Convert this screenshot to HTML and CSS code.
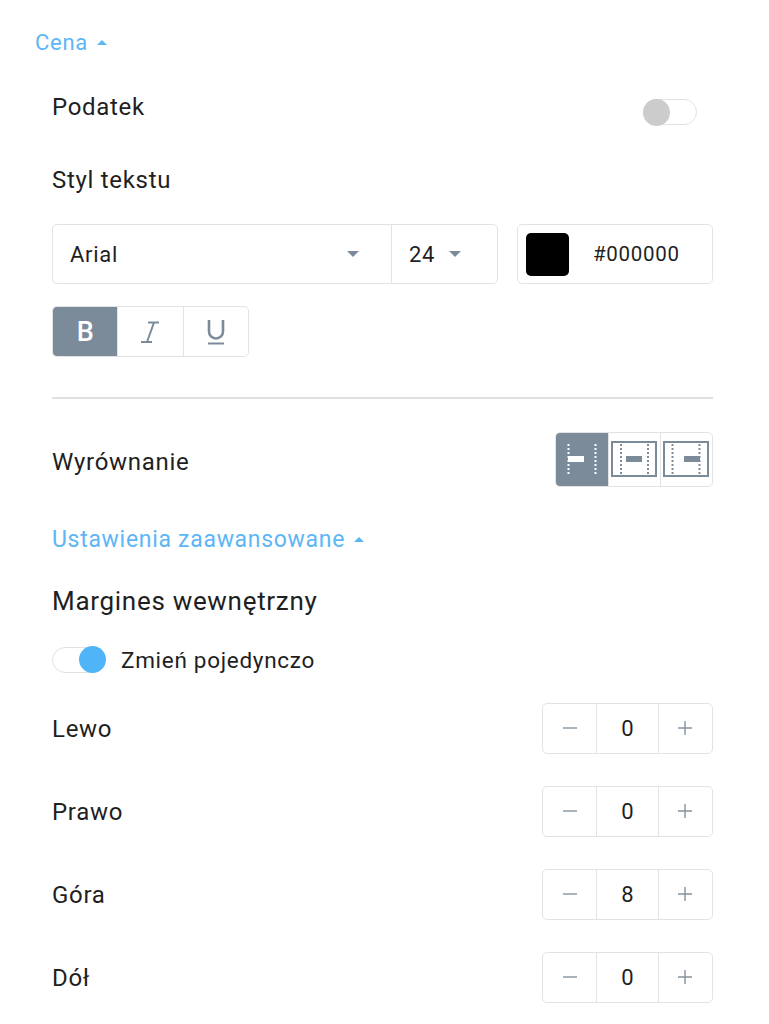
FILE: index.html
```html
<!DOCTYPE html>
<html lang="pl">
<head>
<meta charset="utf-8">
<link rel="stylesheet" href="styles.css">
</head>
<body>
<div class="panel">
  <div class="link-row cena"><span>Cena</span><span class="caret-up"></span></div>

  <div class="row podatek">
    <span class="label">Podatek</span>
    <span class="toggle off"><span class="knob"></span></span>
  </div>

  <div class="row styl"><span class="label">Styl tekstu</span></div>

  <div class="font-row">
    <div class="select-box">
      <div class="sel-font"><span>Arial</span><span class="caret-down"></span></div>
      <div class="sel-size"><span>24</span><span class="caret-down"></span></div>
    </div>
    <div class="color-box">
      <span class="swatch"></span>
      <span class="hex">#000000</span>
    </div>
  </div>

  <div class="seg biu">
    <div class="seg-item active"><span class="bold-b">B</span></div>
    <div class="seg-item">
      <svg width="22" height="24" viewBox="0 0 22 24"><path d="M9 2.5h11M2 22h11M15 2.5 8 22" stroke="#7b8b9a" stroke-width="2" fill="none"/></svg>
    </div>
    <div class="seg-item">
      <svg width="20" height="26" viewBox="0 0 20 26"><path d="M3 1v11.5a7 7 0 0 0 14 0V1" stroke="#7b8b9a" stroke-width="2.6" fill="none"/><path d="M2 24.5h16" stroke="#7b8b9a" stroke-width="2"/></svg>
    </div>
  </div>

  <div class="divider"></div>

  <div class="row align-row">
    <span class="label">Wyrównanie</span>
    <div class="seg align">
      <div class="seg-item active">
        <svg width="46" height="36" viewBox="0 0 46 36"><path d="M9.5 3v31M36.5 3v31" stroke="#fff" stroke-width="2" stroke-dasharray="2 2"/><rect x="9" y="15" width="16" height="6" fill="#fff"/></svg>
      </div>
      <div class="seg-item">
        <svg width="46" height="36" viewBox="0 0 46 36"><rect x="1" y="1" width="44" height="34" fill="none" stroke="#7b8b9a" stroke-width="2"/><path d="M10 3v31M37 3v31" stroke="#7b8b9a" stroke-width="2" stroke-dasharray="2 2"/><rect x="15" y="15" width="16" height="6" fill="#7b8b9a"/></svg>
      </div>
      <div class="seg-item">
        <svg width="46" height="36" viewBox="0 0 46 36"><rect x="1" y="1" width="44" height="34" fill="none" stroke="#7b8b9a" stroke-width="2"/><path d="M9.5 3v31M36.5 3v31" stroke="#7b8b9a" stroke-width="2" stroke-dasharray="2 2"/><rect x="21" y="15" width="16" height="6" fill="#7b8b9a"/></svg>
      </div>
    </div>
  </div>

  <div class="link-row adv"><span>Ustawienia zaawansowane</span><span class="caret-up"></span></div>

  <div class="row margines"><span class="label">Margines wewnętrzny</span></div>

  <div class="row toggle-row">
    <span class="toggle on"><span class="knob"></span></span>
    <span class="small-label">Zmień pojedynczo</span>
  </div>

  <div class="steps">
    <div class="row step-row">
      <span class="label">Lewo</span>
      <div class="stepper"><span class="btn"><svg width="14" height="14" viewBox="0 0 14 14"><path d="M0 7h14" stroke="#8592a0" stroke-width="1.4"/></svg></span><span class="val">0</span><span class="btn"><svg width="14" height="14" viewBox="0 0 14 14"><path d="M0 7h14M7 0v14" stroke="#8592a0" stroke-width="1.4"/></svg></span></div>
    </div>
    <div class="row step-row">
      <span class="label">Prawo</span>
      <div class="stepper"><span class="btn"><svg width="14" height="14" viewBox="0 0 14 14"><path d="M0 7h14" stroke="#8592a0" stroke-width="1.4"/></svg></span><span class="val">0</span><span class="btn"><svg width="14" height="14" viewBox="0 0 14 14"><path d="M0 7h14M7 0v14" stroke="#8592a0" stroke-width="1.4"/></svg></span></div>
    </div>
    <div class="row step-row">
      <span class="label">Góra</span>
      <div class="stepper"><span class="btn"><svg width="14" height="14" viewBox="0 0 14 14"><path d="M0 7h14" stroke="#8592a0" stroke-width="1.4"/></svg></span><span class="val">8</span><span class="btn"><svg width="14" height="14" viewBox="0 0 14 14"><path d="M0 7h14M7 0v14" stroke="#8592a0" stroke-width="1.4"/></svg></span></div>
    </div>
    <div class="row step-row">
      <span class="label">Dół</span>
      <div class="stepper"><span class="btn"><svg width="14" height="14" viewBox="0 0 14 14"><path d="M0 7h14" stroke="#8592a0" stroke-width="1.4"/></svg></span><span class="val">0</span><span class="btn"><svg width="14" height="14" viewBox="0 0 14 14"><path d="M0 7h14M7 0v14" stroke="#8592a0" stroke-width="1.4"/></svg></span></div>
    </div>
  </div>
</div>
</body>
</html>
```

FILE: styles.css
```css
* { box-sizing: border-box; }
html, body { margin: 0; padding: 0; background: #fff; }
body {
  font-family: Roboto, "Noto Sans", sans-serif;
  color: #1f1f1f;
  width: 769px;
  letter-spacing: 0.7px;
}
.panel {
  padding: 22px 56px 0 52px;
  display: flex;
  flex-direction: column;
}
.row {
  display: flex;
  align-items: center;
  justify-content: space-between;
}
.label {
  font-size: 24px;
  line-height: 30px;
}
.link-row {
  display: flex;
  align-items: center;
  gap: 9px;
  color: #5cb6f6;
  font-size: 22px;
  height: 40px;
}
.cena { margin-left: -17px; }
.caret-up {
  width: 0; height: 0;
  border-left: 5px solid transparent;
  border-right: 5px solid transparent;
  border-bottom: 5px solid #5cb6f6;
}
.caret-down {
  width: 0; height: 0;
  border-left: 6px solid transparent;
  border-right: 6px solid transparent;
  border-top: 6px solid #7b8b9a;
}
.podatek { height: 44px; margin-top: 23px; }
.toggle {
  position: relative;
  display: inline-block;
  width: 54px;
  height: 26px;
  border: 1.5px solid #e2e2e2;
  border-radius: 13px;
  background: #fff;
}
.toggle .knob {
  position: absolute;
  top: -1.5px;
  width: 27px;
  height: 27px;
  border-radius: 50%;
}
.toggle.off { margin-top: 10px; margin-right: 16px; }
.toggle.off .knob { left: -1.5px; background: #cccccc; }
.toggle.on { width: 53px; }
.toggle.on .knob { right: -1.5px; background: #4fb5f8; }
.styl { height: 40px; margin-top: 31px; }
.font-row {
  display: flex;
  gap: 19px;
  margin-top: 24px;
}
.select-box {
  width: 446px;
  height: 60px;
  border: 1.5px solid #e3e3e3;
  border-radius: 5px;
  display: flex;
  font-size: 22px;
}
.sel-font {
  width: 339px;
  display: flex;
  align-items: center;
  justify-content: space-between;
  padding: 0 32px 0 17px;
  border-right: 1.5px solid #e3e3e3;
}
.sel-size {
  flex: 1;
  display: flex;
  align-items: center;
  gap: 14px;
  padding-left: 17px;
}
.color-box {
  width: 196px;
  height: 60px;
  border: 1.5px solid #e3e3e3;
  border-radius: 5px;
  display: flex;
  align-items: center;
  padding-left: 8px;
  font-size: 20.5px;
}
.swatch {
  width: 43px;
  height: 43px;
  border-radius: 5px;
  background: #000;
  margin-right: 24px;
}
.seg {
  display: flex;
  border: 1.5px solid #e3e3e3;
  border-radius: 5px;
  overflow: hidden;
}
.seg-item {
  display: flex;
  align-items: center;
  justify-content: center;
}
.seg-item + .seg-item { border-left: 1.5px solid #e3e3e3; }
.seg-item.active { background: #7b8b9a; }
.biu { width: 197px; height: 51px; margin-top: 22px; }
.biu .seg-item { width: 66px; }
.biu .seg-item:first-child { width: 65px; }
.bold-b { color: #fff; font-size: 27px; font-weight: 500; letter-spacing: 0; }
.divider {
  height: 1.5px;
  background: #e0e0e0;
  margin-top: 40px;
}
.align-row { margin-top: 33px; }
.align-row .label { margin-top: 5px; }
.align { width: 158px; height: 55px; }
.align .seg-item { width: 52.7px; }
.adv { margin-top: 33px; font-size: 23px; }
.margines { height: 40px; margin-top: 21px; }
.margines .label { font-size: 26px; }
.toggle-row {
  height: 40px;
  margin-top: 19px;
  justify-content: flex-start;
  gap: 16px;
}
.small-label { font-size: 22.5px; }
.steps {
  display: flex;
  flex-direction: column;
  gap: 32px;
  margin-top: 23px;
}
.step-row { height: 51px; }
.step-row .label { margin-top: 2px; }
.stepper {
  width: 171px;
  height: 51px;
  border: 1.5px solid #e3e3e3;
  border-radius: 5px;
  display: flex;
  font-size: 22px;
  letter-spacing: 0;
}
.stepper .btn {
  width: 54px;
  display: flex;
  align-items: center;
  justify-content: center;
}
.stepper .val {
  width: 64px;
  border-left: 1.5px solid #e3e3e3;
  border-right: 1.5px solid #e3e3e3;
  display: flex;
  align-items: center;
  justify-content: center;
}
```
